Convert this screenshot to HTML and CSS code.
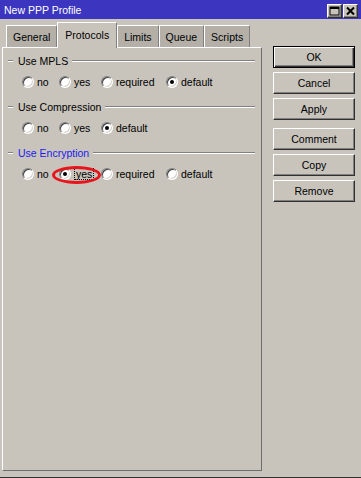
FILE: index.html
```html
<!DOCTYPE html>
<html>
<head>
<meta charset="utf-8">
<link rel="stylesheet" href="styles.css">
</head>
<body>
<div class="window">
  <div class="titlebar">
    <span class="title">New PPP Profile</span>
    <div class="tb-btns">
      <span class="tb-btn">
        <svg width="11" height="10" viewBox="0 0 11 10"><rect x="1" y="1" width="9" height="8" fill="none" stroke="#000" stroke-width="1"/><rect x="1" y="1" width="9" height="2" fill="#000"/></svg>
      </span>
      <span class="tb-btn">
        <svg width="11" height="10" viewBox="0 0 11 10"><path d="M2 1.5 L9 8.5 M9 1.5 L2 8.5" stroke="#000" stroke-width="2" fill="none"/></svg>
      </span>
    </div>
  </div>
  <div class="content">
    <div class="left">
      <div class="tabs">
        <div class="tab">General</div>
        <div class="tab active">Protocols</div>
        <div class="tab">Limits</div>
        <div class="tab">Queue</div>
        <div class="tab">Scripts</div>
      </div>
      <div class="panel">
        <div class="group">
          <div class="legend"><span class="dash"></span><span class="legend-text">Use MPLS</span><span class="line"></span></div>
          <div class="radios">
            <label class="opt"><span class="radio"></span><span class="txt">no</span></label>
            <label class="opt"><span class="radio"></span><span class="txt">yes</span></label>
            <label class="opt"><span class="radio"></span><span class="txt">required</span></label>
            <label class="opt"><span class="radio checked"></span><span class="txt">default</span></label>
          </div>
        </div>
        <div class="group">
          <div class="legend"><span class="dash"></span><span class="legend-text">Use Compression</span><span class="line"></span></div>
          <div class="radios">
            <label class="opt"><span class="radio"></span><span class="txt">no</span></label>
            <label class="opt"><span class="radio"></span><span class="txt">yes</span></label>
            <label class="opt"><span class="radio checked"></span><span class="txt">default</span></label>
          </div>
        </div>
        <div class="group">
          <div class="legend"><span class="dash"></span><span class="legend-text focus">Use Encryption</span><span class="line"></span></div>
          <div class="radios">
            <label class="opt"><span class="radio"></span><span class="txt">no</span></label>
            <label class="opt marked"><span class="radio checked"></span><span class="txt focused">yes</span><span class="ellipse"></span></label>
            <label class="opt"><span class="radio"></span><span class="txt">required</span></label>
            <label class="opt"><span class="radio"></span><span class="txt">default</span></label>
          </div>
        </div>
      </div>
    </div>
    <div class="buttons">
      <div class="btn default">OK</div>
      <div class="btn">Cancel</div>
      <div class="btn">Apply</div>
      <div class="btn sep">Comment</div>
      <div class="btn">Copy</div>
      <div class="btn">Remove</div>
    </div>
  </div>
</div>
</body>
</html>
```
FILE: styles.css
```css
* { box-sizing: border-box; }
html, body { margin: 0; padding: 0; }
body {
  background: #c8c4bc;
  font-family: "Liberation Sans", Arial, sans-serif;
  font-size: 10.5px;
  color: #000;
}
.window {
  width: 361px;
  height: 478px;
  display: flex;
  flex-direction: column;
  border-bottom: 1px solid #303030;
}
.titlebar {
  height: 19px;
  background: #3c35bf;
  display: flex;
  align-items: center;
  justify-content: space-between;
  padding: 1px 3px 0 4px;
}
.title { color: #fff; font-size: 10.5px; }
.tb-btns { display: flex; gap: 1px; margin-top: 2px; }
.tb-btn {
  width: 15px;
  height: 14px;
  background: #c8c4bc;
  border: 1px solid;
  border-color: #fff #303030 #303030 #fff;
  box-shadow: inset -1px -1px 0 #808080;
  display: flex;
  align-items: center;
  justify-content: center;
}
.tb-btn svg { display: block; }
.content {
  display: flex;
  padding-left: 2px;
}
.left {
  width: 260px;
  margin-top: 3px;
  display: flex;
  flex-direction: column;
}
.tabs {
  display: flex;
  align-items: flex-end;
  height: 25px;
  padding-left: 4px;
}
.tab {
  height: 22px;
  padding: 0 6px;
  display: flex;
  align-items: center;
  background: #b4b0a8;
  border-top: 1px solid #fff;
  border-left: 1px solid #fff;
  border-right: 1px solid #808080;
}
.tab.active {
  height: 26px;
  margin-bottom: -1px;
  background: #c8c4bc;
  position: relative;
  z-index: 1;
  padding: 0 7px 2px;
}
.panel {
  height: 424px;
  border: 1px solid;
  border-color: #fff #6e6e6e #6e6e6e #fff;
  padding-top: 6px;
}
.group { margin-bottom: 11px; }
.legend {
  height: 14px;
  display: flex;
  align-items: center;
  padding-left: 5px;
  padding-right: 6px;
}
.dash, .line {
  height: 2px;
  border-top: 1px solid #808080;
  border-bottom: 1px solid #fff;
}
.dash { width: 5px; }
.line { flex: 1; }
.legend-text { padding: 0 4px 0 5px; }
.legend-text.focus { color: #1a1af0; }
.radios {
  margin-top: 7px;
  height: 14px;
  display: grid;
  grid-template-columns: 37px 42px 65px auto;
  padding-left: 19px;
  align-items: center;
}
.opt {
  display: flex;
  align-items: center;
  gap: 3px;
  position: relative;
}
.radio {
  width: 12px;
  height: 12px;
  border-radius: 50%;
  background: #fff;
  border: 1px solid;
  border-color: #808080 #fff #fff #808080;
  box-shadow: inset 1px 1px 0 #404040, inset -1px -1px 0 #d4d0c8;
  position: relative;
  flex: none;
}
.radio.checked::after {
  content: "";
  position: absolute;
  left: 3px;
  top: 3px;
  width: 4px;
  height: 4px;
  border-radius: 50%;
  background: #000;
}
.txt.focused {
  outline: 1px dotted #000;
  padding: 0 1px;
  margin-left: 1px;
  line-height: 10px;
}
.ellipse {
  position: absolute;
  left: -7px;
  top: -2px;
  width: 49px;
  height: 18px;
  border: 3px solid #e8141c;
  border-radius: 50%;
}
.buttons {
  margin-left: 11px;
  margin-top: 27px;
  width: 82px;
  display: flex;
  flex-direction: column;
  gap: 4px;
}
.btn {
  height: 22px;
  display: flex;
  align-items: center;
  justify-content: center;
  border: 1px solid;
  border-color: #fff #303030 #303030 #fff;
  box-shadow: inset -1px -1px 0 #808080;
}
.btn.default {
  border: 1px solid #000;
  box-shadow: inset 1px 1px 0 #fff, inset -1px -1px 0 #303030, inset -2px -2px 0 #808080;
}
.btn.sep { margin-top: 4px; }
```
